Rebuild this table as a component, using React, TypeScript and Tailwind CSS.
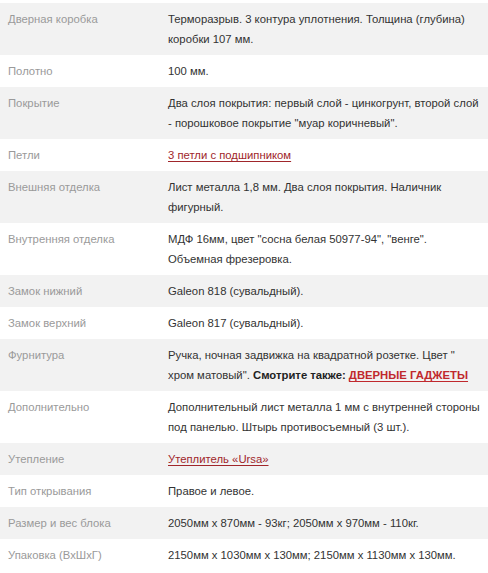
type Row = {
  label: string;
  value: React.ReactNode;
};

const linkCls = "text-[#a0262b] underline underline-offset-2";

const rows: Row[] = [
  {
    label: "Дверная коробка",
    value: "Терморазрыв. 3 контура уплотнения. Толщина (глубина) коробки 107 мм.",
  },
  { label: "Полотно", value: "100 мм." },
  {
    label: "Покрытие",
    value:
      "Два слоя покрытия: первый слой - цинкогрунт, второй слой - порошковое покрытие \"муар коричневый\".",
  },
  {
    label: "Петли",
    value: <a className={linkCls}>3 петли с подшипником</a>,
  },
  {
    label: "Внешняя отделка",
    value: "Лист металла 1,8 мм. Два слоя покрытия. Наличник фигурный.",
  },
  {
    label: "Внутренняя отделка",
    value: "МДФ 16мм, цвет \"сосна белая 50977-94\", \"венге\". Объемная фрезеровка.",
  },
  { label: "Замок нижний", value: "Galeon 818 (сувальдный)." },
  { label: "Замок верхний", value: "Galeon 817 (сувальдный)." },
  {
    label: "Фурнитура",
    value: (
      <>
        Ручка, ночная задвижка на квадратной розетке. Цвет " хром матовый".{" "}
        <b className="font-bold text-[#222]">Смотрите также: </b>
        <a className="font-bold text-[#c0282d] underline underline-offset-2">
          ДВЕРНЫЕ ГАДЖЕТЫ
        </a>
      </>
    ),
  },
  {
    label: "Дополнительно",
    value:
      "Дополнительный лист металла 1 мм с внутренней стороны под панелью. Штырь противосъемный (3 шт.).",
  },
  {
    label: "Утепление",
    value: <a className={linkCls}>Утеплитель «Ursa»</a>,
  },
  { label: "Тип открывания", value: "Правое и левое." },
  {
    label: "Размер и вес блока",
    value: "2050мм х 870мм - 93кг; 2050мм х 970мм - 110кг.",
  },
  {
    label: "Упаковка (ВхШхГ)",
    value: "2150мм х 1030мм х 130мм; 2150мм х 1130мм х 130мм.",
  },
];

export default function App() {
  return (
    <div
      className="bg-white pt-[3px] text-[11.3px] leading-[20px]"
      style={{ fontFamily: '"Liberation Sans", Arial, sans-serif' }}
    >
      {rows.map((row, i) => (
        <div
          key={row.label}
          className={`flex ${i % 2 === 0 ? "bg-[#f2f2f2]" : "bg-white"}`}
        >
          <div className="w-[160px] shrink-0 py-[6px] pl-2 text-[#9a9a9a]">
            {row.label}
          </div>
          <div className="flex-1 py-[6px] pl-2 pr-2 text-[#333]">{row.value}</div>
        </div>
      ))}
    </div>
  );
}
